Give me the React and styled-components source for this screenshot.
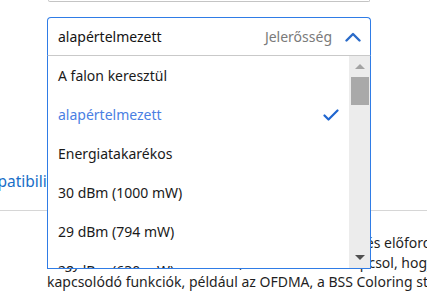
import React from 'react';
import styled, { createGlobalStyle } from 'styled-components';

const GlobalStyle = createGlobalStyle`
  html, body {
    margin: 0;
    padding: 0;
    background: #ffffff;
  }
  body {
    font-family: "Noto Sans", "Open Sans", sans-serif;
    color: #1f1f1f;
  }
`;

const options = [
  'A falon keresztül',
  'alapértelmezett',
  'Energiatakarékos',
  '30 dBm (1000 mW)',
  '29 dBm (794 mW)',
  '28 dBm (630 mW)',
];

function App() {
  const selected = 'alapértelmezett';

  return (
    <Page>
      <GlobalStyle />
      <Content>
        <TopField />
        <SelectArea>
          <SelectHeader>
            <Value>{selected}</Value>
            <Label>Jelerősség</Label>
            <Chevron viewBox="0 0 16 10">
              <polyline points="1.5,8.5 8,2 14.5,8.5" />
            </Chevron>
          </SelectHeader>
          <Menu>
            <List>
              {options.map((opt) => (
                <Option key={opt} active={opt === selected}>
                  <span>{opt}</span>
                  {opt === selected && (
                    <Check viewBox="0 0 16 12">
                      <polyline points="1.5,6.5 5.5,10.5 14.5,1.5" />
                    </Check>
                  )}
                </Option>
              ))}
            </List>
            <Scrollbar>
              <Arrow up />
              <Thumb />
              <TrackFill />
              <Arrow />
            </Scrollbar>
          </Menu>
        </SelectArea>
        <SectionTitle>Kompatibilitás</SectionTitle>
        <Rule />
        <Paragraph>
          <Line>Ha a hálózatában öregebb eszközök is lehetnek, és előfordulhat, hogy ezek</Line>
          <Line>hogy nem tudnak csatlakozni, ha routeren bekapcsol, hogy a Wi-Fi 6-hoz</Line>
          <Line>kapcsolódó funkciók, például az OFDMA, a BSS Coloring stb. működjenek.</Line>
        </Paragraph>
      </Content>
    </Page>
  );
}

export default App;

const Page = styled.div`
  width: 427px;
  height: 306px;
  overflow: hidden;
  position: relative;
`;

const Content = styled.div`
  display: flex;
  flex-direction: column;
  padding-left: 47px;
`;

const TopField = styled.div`
  margin-left: 1px;
  width: 320px;
  height: 1px;
  border: 1px solid #c4c4c4;
  border-top: none;
  border-radius: 0 0 4px 4px;
`;

const SelectArea = styled.div`
  position: relative;
  margin-top: 15px;
  width: 324px;
  z-index: 2;
`;

const SelectHeader = styled.div`
  box-sizing: border-box;
  height: 39px;
  display: flex;
  align-items: center;
  padding: 0 9px 0 10px;
  border: 1px solid #2f7ce6;
  border-bottom-color: #c9c9c9;
  border-radius: 4px 4px 0 0;
  background: #fff;
`;

const Value = styled.span`
  flex: 1;
  font-size: 14px;
  color: #141414;
`;

const Label = styled.span`
  font-size: 14px;
  color: #7a7a7a;
  margin-right: 13px;
`;

const Chevron = styled.svg`
  width: 16px;
  height: 10px;
  margin-top: 1px;
  fill: none;
  stroke: #2a6bc9;
  stroke-width: 2.4;
  stroke-linecap: round;
  stroke-linejoin: round;
`;

const Menu = styled.div`
  position: absolute;
  top: 39px;
  left: 0;
  width: 324px;
  height: 213px;
  box-sizing: border-box;
  display: flex;
  background: #fff;
  border: 1px solid #2f7ce6;
  border-top: none;
  overflow: hidden;
`;

const List = styled.div`
  flex: 1;
  display: flex;
  flex-direction: column;
`;

const Option = styled.div`
  flex: 0 0 39px;
  display: flex;
  align-items: center;
  justify-content: space-between;
  padding: 0 10px 0 10px;
  font-size: 14px;
  color: ${(p) => (p.active ? '#4a7fe3' : '#1a1a1a')};
`;

const Check = styled.svg`
  width: 16px;
  height: 12px;
  fill: none;
  stroke: #1f65cf;
  stroke-width: 2.2;
  stroke-linecap: round;
  stroke-linejoin: round;
`;

const Scrollbar = styled.div`
  width: 21px;
  display: flex;
  flex-direction: column;
  align-items: center;
  background: #ececec;
`;

const Arrow = styled.div`
  height: 21px;
  width: 100%;
  display: flex;
  align-items: center;
  justify-content: center;
  &::before {
    content: '';
    border-left: 5px solid transparent;
    border-right: 5px solid transparent;
    ${(p) =>
      p.up
        ? 'border-bottom: 5px solid #a3a3a3;'
        : 'border-top: 5px solid #505050;'}
  }
`;

const Thumb = styled.div`
  width: 18px;
  height: 28px;
  margin-left: 1px;
  background: #a9a9a9;
`;

const TrackFill = styled.div`
  flex: 1;
`;

const SectionTitle = styled.h2`
  margin: 113px 0 0 -83px;
  font-size: 15.5px;
  font-weight: 400;
  color: #1a6ec8;
  line-height: 24px;
  white-space: nowrap;
`;

const Rule = styled.div`
  margin: 17px 0 0 -47px;
  width: 427px;
  height: 1px;
  background: #d6d6d6;
`;

const Paragraph = styled.div`
  margin-top: 22px;
  font-size: 14px;
  line-height: 19.5px;
  color: #1f1f1f;
`;

const Line = styled.div`
  white-space: nowrap;
`;
